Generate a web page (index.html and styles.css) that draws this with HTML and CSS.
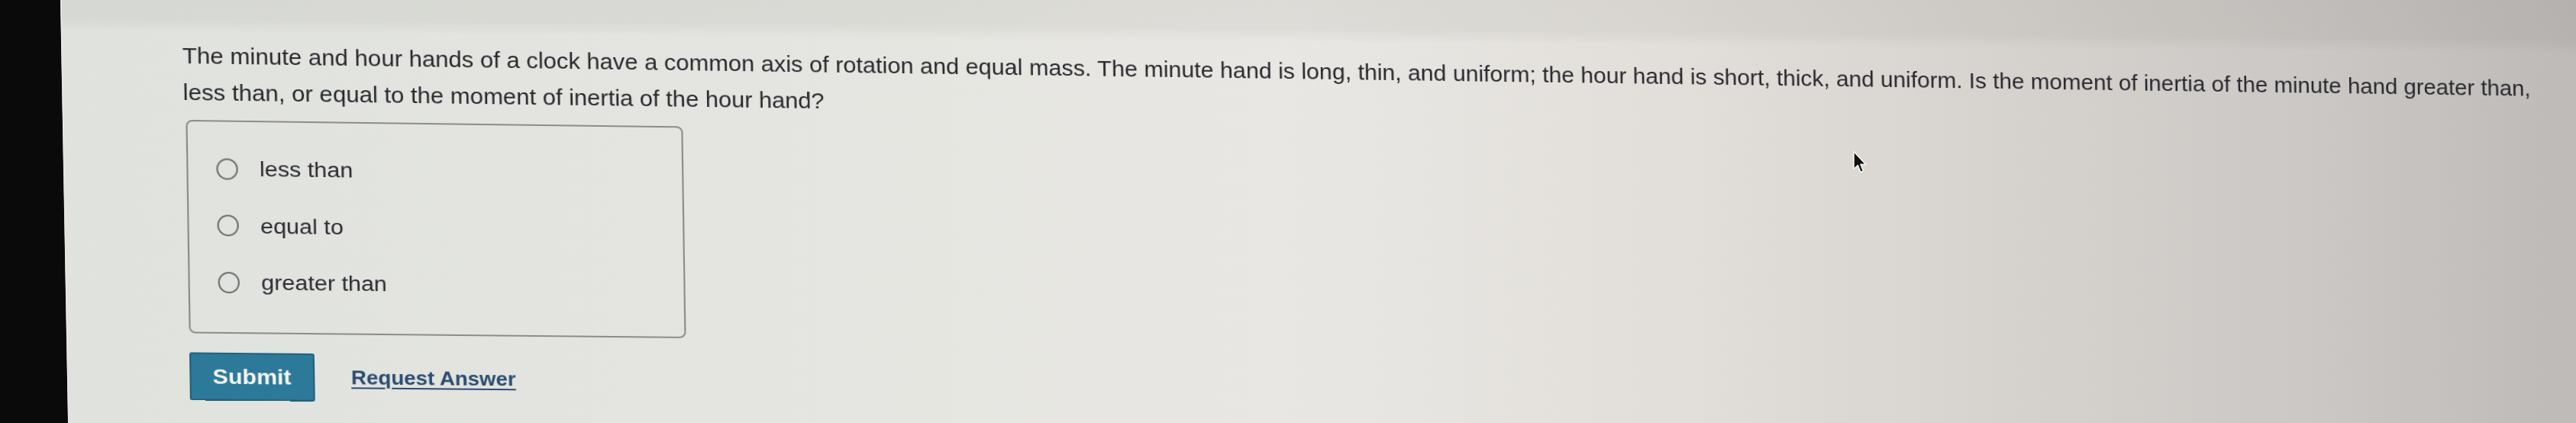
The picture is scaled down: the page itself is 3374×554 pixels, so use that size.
FILE: index.html
```html
<!DOCTYPE html>
<html lang="en">
<head>
<meta charset="utf-8">
<title>Question</title>
<link rel="stylesheet" href="styles.css">
</head>
<body>
<svg class="bezel" viewBox="0 0 94 554" preserveAspectRatio="none" aria-hidden="true">
  <polygon points="0,0 79,0 89,554 0,554" fill="#0a0a0b"/>
  <line x1="80" y1="0" x2="90" y2="554" stroke="#ece4e8" stroke-width="1.6"/>
</svg>
<main class="content">
  <p class="question">The minute and hour hands of a clock have a common axis of rotation and equal mass. The minute hand is long, thin, and uniform; the hour hand is short, thick, and uniform. Is the moment of inertia of the minute hand greater than, less than, or equal to the moment of inertia of the hour hand?</p>
  <div class="options">
    <label class="option"><input type="radio" name="ans" class="radio"><span>less than</span></label>
    <label class="option"><input type="radio" name="ans" class="radio"><span>equal to</span></label>
    <label class="option"><input type="radio" name="ans" class="radio"><span>greater than</span></label>
  </div>
  <div class="actions">
    <button class="submit" type="button">Submit</button>
    <a class="request" href="#">Request Answer</a>
  </div>
</main>
<svg class="cursor" viewBox="0 0 20 32" aria-hidden="true">
  <path d="M2 1.5 L2 24.5 L7.3 19.6 L11 28.5 L14.6 27 L11 18.4 L18 18.4 Z" fill="#111" stroke="#f4f4f4" stroke-width="1.6" stroke-linejoin="round"/>
</svg>
</body>
</html>
```

FILE: styles.css
```css
html, body {
  margin: 0;
  padding: 0;
}

body {
  position: relative;
  width: 3374px;
  height: 554px;
  overflow: hidden;
  display: flex;
  align-items: flex-start;
  font-family: "Liberation Sans", Arial, Helvetica, sans-serif;
  color: #29282d;
  background:
    linear-gradient(180.5deg, rgba(70, 70, 60, 0.075) 0px, rgba(70, 70, 60, 0.065) 52px, rgba(70, 70, 60, 0) 70px),
    linear-gradient(to right, #e0e2dd 0%, #e4e5e0 30%, #e9e7e3 50%, #e2dfdb 65%, #d6d3cf 78%, #cac7c4 90%, #bdbab7 100%);
}

.bezel {
  flex: none;
  width: 94px;
  height: 554px;
  display: block;
}

/* photo of a screen: slight tilt and perspective */
.content {
  flex: none;
  box-sizing: border-box;
  width: 3081px;
  height: 500px;
  padding: 47px 0 0 132px;
  transform: matrix3d(1.091, 0.0161, 0, 0.000012, 0.015, 1, 0, 0, 0, 0, 1, 0, 0, 0, 0, 1);
  transform-origin: 0 0;
}

.question {
  margin: 0;
  width: 2945px;
  font-size: 28.8px;
  line-height: 48px;
}

.options {
  margin: 12px 0 0 3px;
  box-sizing: border-box;
  width: 603px;
  height: 280px;
  border: 2px solid #8c8b8b;
  border-radius: 8px;
  padding: 41.5px 0 0 34px;
  display: flex;
  flex-direction: column;
  gap: 34.6px;
}

.option {
  display: flex;
  align-items: center;
  gap: 26px;
  height: 40px;
  font-size: 28.2px;
  color: #2a2930;
}

.radio {
  appearance: none;
  -webkit-appearance: none;
  margin: 0;
  flex: none;
  width: 26px;
  height: 28px;
  box-sizing: border-box;
  border: 2px solid #6c6b6f;
  border-radius: 50%;
  background: transparent;
}

.actions {
  margin: 25px 0 0 3px;
  display: flex;
  align-items: center;
  gap: 44.6px;
}

.submit {
  box-sizing: border-box;
  width: 150.5px;
  height: 63px;
  border: 2px solid #22617c;
  border-radius: 3px;
  background: #2c7999;
  color: #f6f6f2;
  font-family: "Liberation Sans", Arial, Helvetica, sans-serif;
  font-weight: bold;
  font-size: 28px;
  padding: 0;
}

.request {
  color: #2b4c6f;
  font-weight: bold;
  font-size: 25.6px;
  text-decoration: underline;
  text-decoration-thickness: 2px;
  text-underline-offset: 4px;
}

.cursor {
  position: absolute;
  left: 2426px;
  top: 197px;
  width: 20px;
  height: 32px;
}
```
